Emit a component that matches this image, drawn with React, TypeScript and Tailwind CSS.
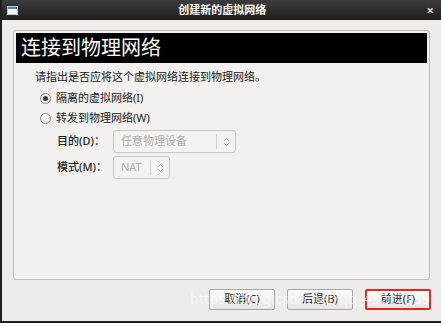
import React from "react";

const font = { fontFamily: '"Noto Sans", "Noto Sans CJK SC", "DejaVu Sans", sans-serif' };

function Radio({ checked }: { checked?: boolean }) {
  return (
    <span className="flex h-[11px] w-[11px] items-center justify-center rounded-full border border-[#8c8a86] bg-gradient-to-b from-[#ffffff] to-[#e4e2de]">
      {checked && <span className="h-[5px] w-[5px] rounded-full bg-[#3a3a3a]" />}
    </span>
  );
}

function Combo({ label, width }: { label: string; width: string }) {
  return (
    <div className={`flex h-[23px] items-center rounded-[3px] border border-[#c9c7c3] bg-[#f4f3f1] ${width}`}>
      <span className="flex-1 pl-[7px] text-[11px] text-[#b0aeab]">{label}</span>
      <span className="h-[15px] w-px bg-[#d2d0cc]" />
      <span className="flex w-[18px] justify-center">
        <svg width="7" height="10" viewBox="0 0 7 10" fill="none" stroke="#b5b3af" strokeWidth="1">
          <path d="M1 4 L3.5 1.5 L6 4" />
          <path d="M1 6 L3.5 8.5 L6 6" />
        </svg>
      </span>
    </div>
  );
}

function Button({ label, red }: { label: string; red?: boolean }) {
  return (
    <button
      className={`flex h-[21px] w-[66px] items-center justify-center rounded-[2px] bg-gradient-to-b from-[#fbfbfa] to-[#e6e5e2] text-[11px] text-[#222] ${
        red ? "border-2 border-[#ee2020]" : "border border-[#a8a6a2]"
      }`}
    >
      {label}
    </button>
  );
}

export default function App() {
  return (
    <div className="h-[326px] w-[443px] bg-white" style={font}>
      <div className="relative flex h-[323px] w-[441px] flex-col border-b-2 border-l-2 border-[#1e1e1e] bg-[#edecea]">
        {/* title bar */}
        <div className="flex h-[20px] items-center bg-gradient-to-b from-[#3c3c3c] to-[#1f1f1f] px-[5px]">
          <span className="flex h-[9px] w-[11px] flex-col border border-[#b9c8db] bg-[#f2f4f8]">
            <span className="h-[2px] bg-[#5b7fb0]" />
          </span>
          <span className="flex-1 text-center text-[11px] font-bold text-white">创建新的虚拟网络</span>
          <span className="pr-[2px] text-[13px] font-bold leading-none text-[#d8d8d8]">×</span>
        </div>

        {/* content panel */}
        <div className="mx-[11px] mt-[10px] flex h-[250px] flex-col rounded-[3px] border border-[#bdbcb8] bg-[#f2f1ef] p-[2px]">
          <div className="flex h-[30px] items-center bg-black pl-[5px] text-[20px] leading-none text-white">
            连接到物理网络
          </div>
          <div className="flex flex-col pl-[19px] pt-[5px] text-[11px] text-[#222]">
            <div className="h-[18px] leading-[18px]">请指出是否应将这个虚拟网络连接到物理网络。</div>
            <div className="mt-[3px] flex h-[18px] items-center gap-[5px] pl-[5px]">
              <Radio checked />
              <span>隔离的虚拟网络(I)</span>
            </div>
            <div className="mt-[2px] flex h-[18px] items-center gap-[5px] pl-[5px]">
              <Radio />
              <span>转发到物理网络(W)</span>
            </div>
            <div className="mt-[3px] flex items-center pl-[22px]">
              <span className="w-[56px] font-medium">目的(D)：</span>
              <Combo label="任意物理设备" width="w-[123px]" />
            </div>
            <div className="mt-[3px] flex items-center pl-[22px]">
              <span className="w-[56px] font-medium">模式(M)：</span>
              <Combo label="NAT" width="w-[57px]" />
            </div>
          </div>
        </div>

        {/* buttons */}
        <div className="mt-[9px] flex justify-end gap-[12px] pr-[10px]">
          <Button label="取消(C)" />
          <Button label="后退(B)" />
          <Button label="前进(F)" red />
        </div>

        <span className="pointer-events-none absolute left-[188px] top-[288px] text-[14px] tracking-[0.3px] text-white/60">
          https://blog.csdn.net/qq_43217959
        </span>
      </div>
    </div>
  );
}
